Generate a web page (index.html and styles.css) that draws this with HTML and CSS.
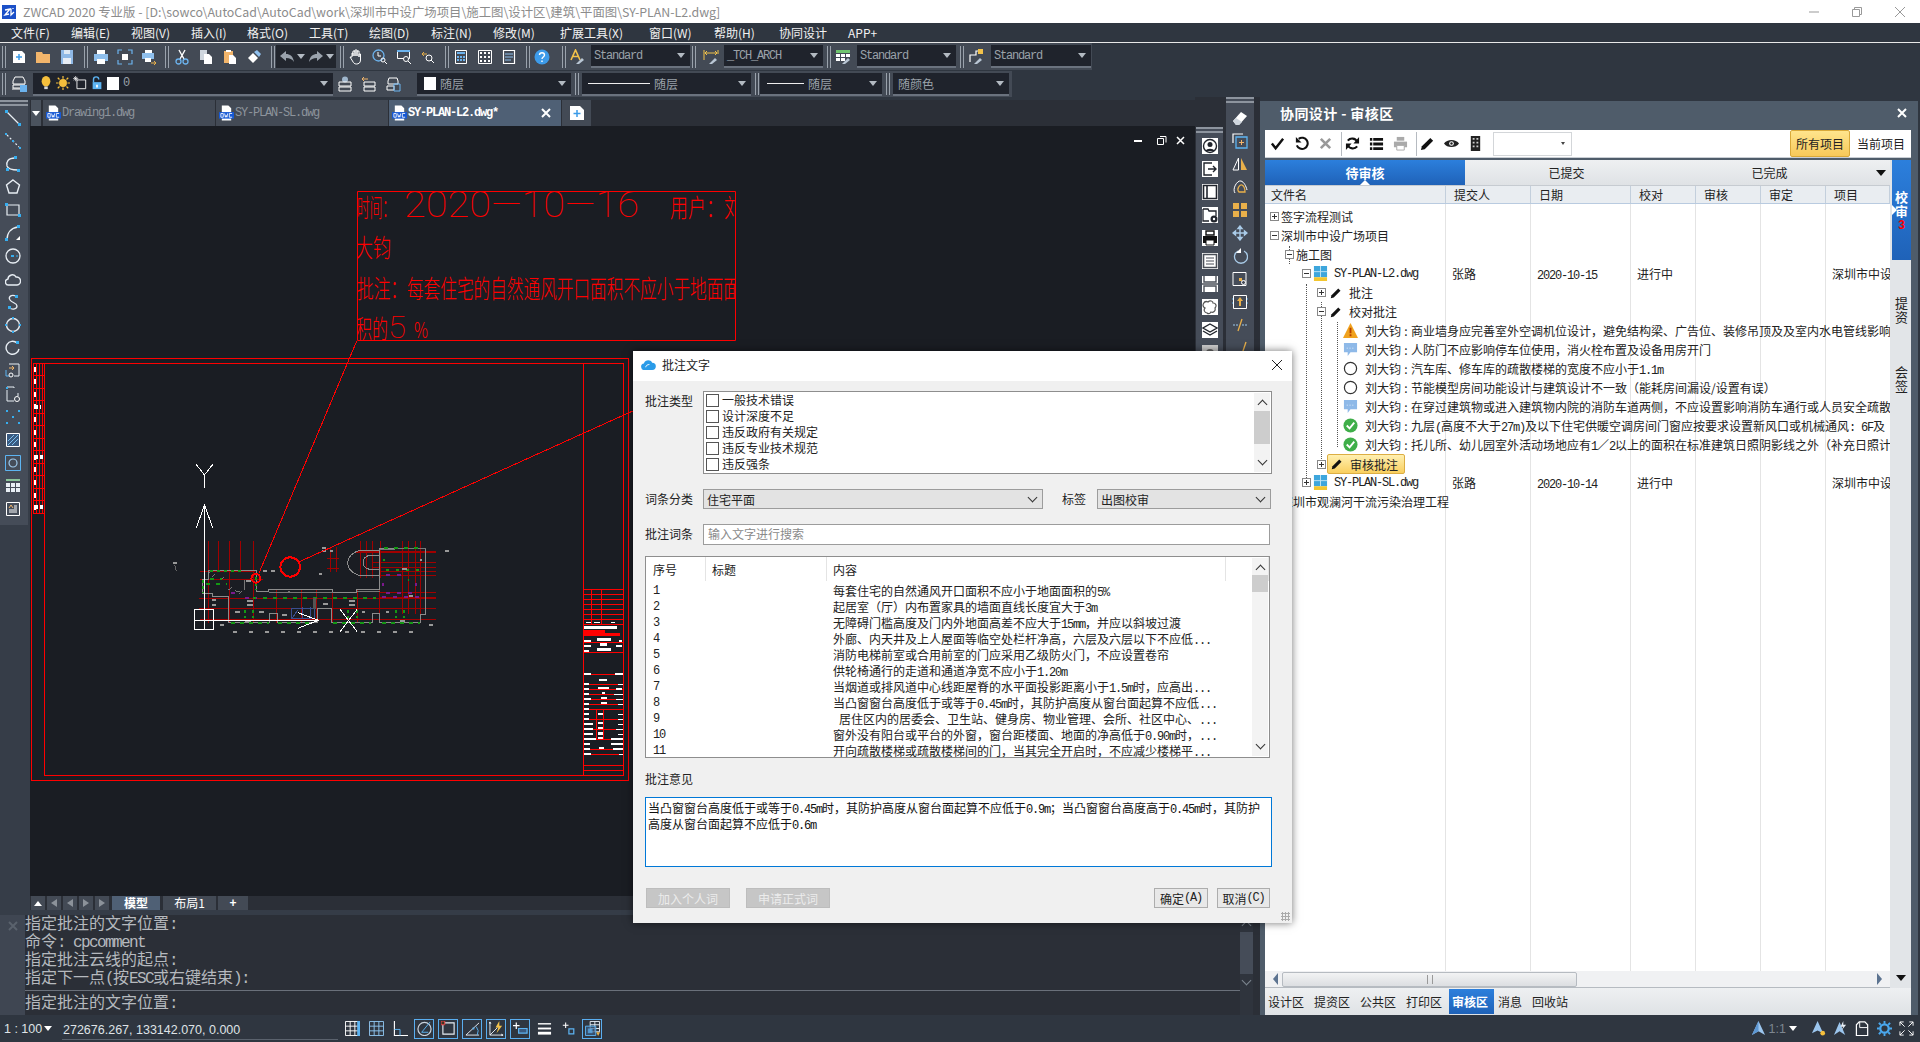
FILE: index.html
```html
<!DOCTYPE html>
<html lang="zh">
<head>
<meta charset="utf-8">
<title>ZWCAD 2020</title>
<link rel="stylesheet" href="styles.css">
</head>
<body>
<svg class="defs" xmlns="http://www.w3.org/2000/svg">
<symbol id="new" viewBox="0 0 16 16"><path d="M2 2h9l3 3v9H2z" fill="#fff"/><path d="M8 5v6M5 8h6" stroke="#3b9be8" stroke-width="1.5"/></symbol>
<symbol id="open" viewBox="0 0 16 16"><path d="M1 3h6l1 2h7v9H1z" fill="#f2b56b"/></symbol>
<symbol id="save" viewBox="0 0 16 16"><path d="M2 1h12v14H2z" fill="#8fb9e6"/><path d="M5 1h6v4H5z" fill="#dce8f4"/><path d="M4 9h8v6H4z" fill="#e8eef6"/></symbol>
<symbol id="print" viewBox="0 0 16 16"><path d="M4 1h8v4H4z" fill="#fff"/><path d="M1 5h14v7H1z" fill="#8fc0ee"/><path d="M4 10h8v5H4z" fill="#fff"/></symbol>
<symbol id="prev" viewBox="0 0 16 16"><path d="M1 5V1h4M11 1h4v4M15 11v4h-4M5 15H1v-4" fill="none" stroke="#6cb3ee" stroke-width="1.2"/><path d="M5 5h6v6H5z" fill="#fff"/></symbol>
<symbol id="plot" viewBox="0 0 16 16"><path d="M4 1h7v3H4z" fill="#fff"/><path d="M1 4h12v6H1z" fill="#8fc0ee"/><path d="M4 9h6v4H4z" fill="#fff"/><path d="M10 14h5m-2-2l2 2-2 2" fill="none" stroke="#e9b04a"/></symbol>
<symbol id="cut" viewBox="0 0 16 16"><path d="M5 1l5 9M11 1L6 10" stroke="#fff" stroke-width="1.4" fill="none"/><circle cx="4.500" cy="12.500" r="2.500" fill="none" stroke="#6cb3ee" stroke-width="1.300"/><circle cx="11.500" cy="12.500" r="2.500" fill="none" stroke="#6cb3ee" stroke-width="1.300"/></symbol>
<symbol id="copy" viewBox="0 0 16 16"><path d="M2 1h7v10H2z" fill="#cfd6de"/><path d="M6 5h5l3 3v7H6z" fill="#fff"/></symbol>
<symbol id="paste" viewBox="0 0 16 16"><path d="M2 2h9v12H2z" fill="#f2b56b"/><path d="M4 1h5v2H4z" fill="#fff"/><path d="M7 6h4l3 3v6H7z" fill="#fff"/></symbol>
<symbol id="brush" viewBox="0 0 16 16"><path d="M2 9l5-5 5 5-5 5z" fill="#fff"/><path d="M8 3l3-2 4 4-2 3z" fill="#8fc0ee"/></symbol>
<symbol id="undo" viewBox="0 0 16 16"><path d="M1 7l6-5v3c4 0 7 2 8 8-2-3-4-4-8-4v3z" fill="#9aa2ac"/></symbol>
<symbol id="redo" viewBox="0 0 16 16"><path d="M15 7L9 2v3C5 5 2 7 1 13c2-3 4-4 8-4v3z" fill="#9aa2ac"/></symbol>
<symbol id="hand" viewBox="0 0 16 16"><path d="M4 8V4h1v3V2h2v5V1h2v6V2h2v6V5h1.500v6c0 3-2 4-4 4s-3-1-4-3L2 8z" fill="none" stroke="#fff"/></symbol>
<symbol id="zoomr" viewBox="0 0 16 16"><circle cx="6.500" cy="6.500" r="5.500" fill="none" stroke="#6cb3ee" stroke-width="1.300"/><path d="M6 3v4h3" stroke="#fff" fill="none"/><circle cx="11" cy="11" r="2" fill="none" stroke="#fff"/><path d="M12.500 12.500L15 15" stroke="#fff"/></symbol>
<symbol id="zoomw" viewBox="0 0 16 16"><path d="M1.500 2.500h12v7h-12z" fill="none" stroke="#fff"/><path d="M1 1h13v2H1z" fill="#6cb3ee"/><circle cx="10" cy="10" r="2.500" fill="#434a55" stroke="#fff"/><path d="M12 12l3 3" stroke="#fff"/></symbol>
<symbol id="zoomp" viewBox="0 0 16 16"><path d="M2 5h5M4 3L2 5l2 2" fill="none" stroke="#e9b04a"/><circle cx="9" cy="9" r="3" fill="none" stroke="#fff"/><path d="M11 11l3 3" stroke="#fff"/></symbol>
<symbol id="calc" viewBox="0 0 16 16"><path d="M2.500 1.500h11v13h-11z" fill="none" stroke="#fff"/><path d="M4 3h8v2H4z" fill="#6cb3ee"/><path d="M4 7h2v2H4zM7 7h2v2H7zM10 7h2v2h-2zM4 10h2v2H4zM7 10h2v2H7zM10 10h2v2h-2z" fill="#6cb3ee"/></symbol>
<symbol id="sheet" viewBox="0 0 16 16"><path d="M1.500 1.500h13v13h-13z" fill="none" stroke="#fff"/><path d="M3 3h2v2H3zM7 3h2v2H7zM11 3h2v2h-2zM3 7h2v2H3zM7 7h2v2H7zM11 7h2v2h-2zM3 11h2v2H3zM7 11h2v2H7zM11 11h2v2h-2z" fill="#fff"/></symbol>
<symbol id="doc" viewBox="0 0 16 16"><path d="M2.500 1.500h11v13h-11z" fill="none" stroke="#fff" stroke-width="1.200"/><path d="M4 5h8M4 8h8M4 11h6" stroke="#8fc0ee"/></symbol>
<symbol id="help" viewBox="0 0 16 16"><circle cx="8" cy="8" r="7.500" fill="#3d9be9"/><path d="M5.500 6c0-3 5-3 5 0 0 2-2.500 2-2.500 4M8 11.500v1.500" fill="none" stroke="#fff" stroke-width="1.400"/></symbol>
<symbol id="stext" viewBox="0 0 16 16"><path d="M1 11L5.500 1 10 11M3 7.500h5" fill="none" stroke="#f2c24a" stroke-width="1.600"/><path d="M6 15l6-6 2 2-5 4z" fill="#b9c6d4"/></symbol>
<symbol id="sdim" viewBox="0 0 16 16"><path d="M1 1v10M15 1v4M2 4h12M4 2L2 4l2 2M12 2l2 2-2 2" fill="none" stroke="#f2c24a"/><path d="M6 15l6-6 2 2-5 4z" fill="#b9c6d4"/></symbol>
<symbol id="stab" viewBox="0 0 16 16"><path d="M1 1h14v3H1z" fill="#6fc46f"/><path d="M1 5h4v3H1zM6 5h4v3H6zM11 5h4v3h-4zM1 9h4v3H1zM6 9h4v3H6z" fill="#fff"/><path d="M7 15l6-6 2 2-5 4z" fill="#b9c6d4"/></symbol>
<symbol id="smul" viewBox="0 0 16 16"><path d="M2 13V6h6V2h4" fill="none" stroke="#fff" stroke-width="1.200"/><path d="M10 0h5v5h-5z" fill="#f2c24a"/><path d="M6 15l6-6 2 2-5 4z" fill="#b9c6d4"/></symbol>
<symbol id="layer" viewBox="0 0 16 16"><path d="M2 5l2-4h8l2 4v3H2zM2 9h12v3H2zM1 13h10" fill="none" stroke="#fff"/><path d="M9 9h7v7H9z" fill="#6cb3ee"/></symbol>
<symbol id="bulb" viewBox="0 0 16 16"><ellipse cx="8" cy="6" rx="5" ry="6" fill="#f5bf3c"/><path d="M6 12h4v3H6z" fill="#d9d9d9"/></symbol>
<symbol id="sun" viewBox="0 0 16 16"><circle cx="8" cy="8" r="4.500" fill="#f5bf3c"/><path d="M8 0v3M8 13v3M0 8h3M13 8h3M2 2l2 2M12 12l2 2M2 14l2-2M12 4l2-2" stroke="#f5bf3c" stroke-width="1.400"/></symbol>
<symbol id="frz" viewBox="0 0 16 16"><path d="M4.500 4.500h10v10h-10z" fill="#1f232c" stroke="#fff"/><path d="M3 0v6M0 3h6M1 1l4 4M5 1L1 5" stroke="#fff" stroke-width=".8"/></symbol>
<symbol id="lock" viewBox="0 0 16 16"><path d="M4 7V4a3 3 0 0 1 6 0" fill="none" stroke="#5db4f2" stroke-width="1.600"/><path d="M3 7h10v8H3z" fill="#5db4f2"/><path d="M7 10h2v3H7z" fill="#fff"/></symbol>
<symbol id="lay1" viewBox="0 0 16 16"><circle cx="8" cy="3.500" r="3" fill="#9fb6cc"/><path d="M2 6h12v4H2zM2 11h12v4H2z" fill="none" stroke="#fff"/></symbol>
<symbol id="lay2" viewBox="0 0 16 16"><path d="M3 6h11v4H3zM3 11h11v4H3z" fill="none" stroke="#fff"/><path d="M1 3h6M3 1L1 3l2 2" stroke="#f2b56b" fill="none"/></symbol>
<symbol id="lay3" viewBox="0 0 16 16"><path d="M3 5l1-3h8l1 3v3H3zM2 10h7v4H2z" fill="none" stroke="#fff"/><path d="M9 8h6v7H9z" fill="none" stroke="#6cb3ee"/></symbol>
<symbol id="l1" viewBox="0 0 16 16"><path d="M2 2l12 12" stroke="#e8eef4" stroke-width="1.200"/><path d="M0 0h3v3H0zM13 13h3v3h-3z" fill="#37aef0"/></symbol>
<symbol id="l2" viewBox="0 0 16 16"><path d="M2 2l12 12" stroke="#e8eef4" stroke-width="1.200" stroke-dasharray="2 2"/><path d="M0 0h2v2H0zM7 7h2v2H7zM14 14h2v2h-2z" fill="#37aef0"/></symbol>
<symbol id="l3" viewBox="0 0 16 16"><path d="M10 2C3 2 1 6 2 10c1 3 4 4 11 4" fill="none" stroke="#e8eef4" stroke-width="1.300"/><path d="M9 0h3v3H9zM1 12h3v3H1zM12 13h3v3h-3z" fill="#37aef0"/></symbol>
<symbol id="l4" viewBox="0 0 16 16"><path d="M8 1l6.500 5-2.500 8H4L1.500 6z" fill="none" stroke="#e8eef4" stroke-width="1.400"/></symbol>
<symbol id="l5" viewBox="0 0 16 16"><path d="M2 3h12v10H2z" fill="none" stroke="#e8eef4" stroke-width="1.200"/><path d="M0 1h3v3H0zM13 12h3v3h-3z" fill="#37aef0"/></symbol>
<symbol id="l6" viewBox="0 0 16 16"><path d="M2 15C2 8 6 3 13 2" fill="none" stroke="#e8eef4" stroke-width="1.400"/><path d="M0 13h3v3H0zM12 0h3v3h-3z" fill="#37aef0"/><path d="M11 15l4-4v4z" fill="#fff"/></symbol>
<symbol id="l7" viewBox="0 0 16 16"><circle cx="8" cy="8" r="7" fill="none" stroke="#e8eef4" stroke-width="1.300"/><path d="M6 7h3v2H6zM11 7.500h2v1h-2z" fill="#37aef0"/></symbol>
<symbol id="l8" viewBox="0 0 16 16"><path d="M4 14a3 3 0 0 1-1-6c0-4 6-6 8-2a4 4 0 0 1 1 8z" fill="none" stroke="#e8eef4" stroke-width="1.400"/></symbol>
<symbol id="l9" viewBox="0 0 16 16"><path d="M11 2C6 0 3 3 5 6s7 3 7 6-4 4-8 2" fill="none" stroke="#e8eef4" stroke-width="1.300"/><path d="M10 1h3v3h-3zM3 12h3v3H3z" fill="#37aef0"/></symbol>
<symbol id="l10" viewBox="0 0 16 16"><circle cx="8" cy="8" r="6.500" fill="none" stroke="#e8eef4" stroke-width="1.400"/><path d="M7 0h2v2H7zM0 7h2v2H0zM14 7h2v2h-2zM7 14h2v2H7z" fill="#37aef0"/></symbol>
<symbol id="l11" viewBox="0 0 16 16"><path d="M12 3a6.500 6.500 0 1 0 2 6" fill="none" stroke="#e8eef4" stroke-width="1.400"/><path d="M11 1h3v3h-3z" fill="#37aef0"/></symbol>
<symbol id="l12" viewBox="0 0 16 16"><path d="M4 1h10v12H9" fill="none" stroke="#e8eef4"/><path d="M1 5h4M6 5L4 3M6 5L4 7" stroke="#f2b56b" fill="none" transform="translate(3 0)"/><path d="M1 7v6h3" fill="none" stroke="#5db4f2"/><circle cx="6" cy="12" r="2" fill="none" stroke="#fff"/></symbol>
<symbol id="l13" viewBox="0 0 16 16"><path d="M2 1h7v1M2 4v11h7M13 7v3" fill="none" stroke="#e8eef4"/><circle cx="12" cy="13" r="2.500" fill="none" stroke="#fff"/><path d="M1 1h2v2H1z" fill="#37aef0"/></symbol>
<symbol id="l14" viewBox="0 0 16 16"><path d="M1 1h2v2H1zM13 1h2v2h-2zM7 7h2v2H7zM1 13h2v2H1zM13 13h2v2h-2z" fill="#37aef0"/></symbol>
<symbol id="l15" viewBox="0 0 16 16"><path d="M1.500 1.500h13v13h-13z" fill="#3a5a80" stroke="#fff"/><path d="M3 9l6-6M3 13l10-10M7 13l6-6" stroke="#7cc0f0"/></symbol>
<symbol id="l16" viewBox="0 0 16 16"><path d="M.5.500h15v15H.5z" fill="none" stroke="#5db4f2"/><circle cx="8" cy="8" r="4" fill="none" stroke="#9fc9ea" stroke-width="1.200"/></symbol>
<symbol id="l17" viewBox="0 0 16 16"><path d="M1 1h14v2H1z" fill="#8bc49a"/><path d="M1 5h4v4H1zM6 5h4v4H6zM11 5h4v4h-4zM1 10h4v4H1zM6 10h4v4H6zM11 10h4v4h-4z" fill="#e8eef4"/></symbol>
<symbol id="l18" viewBox="0 0 16 16"><path d="M1.500 1.500h13v13h-13z" fill="none" stroke="#fff"/><path d="M4 7l2-3 2 3" stroke="#f2b56b" fill="none"/><path d="M9 5h3M9 7h3M4 9h8M4 11h8" stroke="#fff"/></symbol>
<symbol id="a1" viewBox="0 0 16 16"><path d="M0 0h16v16H0z" fill="#fff"/><circle cx="8" cy="8" r="6.500" fill="none" stroke="#20242c" stroke-width="1.400"/><circle cx="8" cy="6.500" r="2.500" fill="#20242c"/><path d="M3.500 13c1-3 8-3 9 0z" fill="#20242c"/></symbol>
<symbol id="a2" viewBox="0 0 16 16"><path d="M0 0h16v16H0z" fill="#fff"/><path d="M10 2H2v12h8" fill="none" stroke="#20242c" stroke-width="1.400"/><path d="M6 8h8M11 5l3 3-3 3" fill="none" stroke="#20242c" stroke-width="1.400"/></symbol>
<symbol id="a3" viewBox="0 0 16 16"><path d="M0 0h16v16H0z" fill="#fff"/><path d="M1.500 1.500h13v13h-13z" fill="none" stroke="#20242c" stroke-width="1.600"/><path d="M5 2v12" stroke="#20242c" stroke-width="1.600"/></symbol>
<symbol id="a4" viewBox="0 0 16 16"><path d="M0 0h16v16H0z" fill="#fff"/><path d="M1 2h5l1 2h7v5M7 14H1V2" fill="none" stroke="#20242c" stroke-width="1.300"/><circle cx="12" cy="12" r="3.500" fill="#20242c"/><circle cx="12" cy="12" r="1.200" fill="#fff"/></symbol>
<symbol id="a5" viewBox="0 0 16 16"><path d="M0 0h16v16H0z" fill="#fff"/><path d="M4 1h8v4H4z" fill="none" stroke="#111" stroke-width="1.400"/><path d="M1 6h14v7H1z" fill="#111"/><path d="M4 10h8v5H4z" fill="#fff" stroke="#111"/></symbol>
<symbol id="a6" viewBox="0 0 16 16"><path d="M0 0h16v16H0z" fill="#fff"/><path d="M1.500 1.500h13v13h-13z" fill="none" stroke="#4a4f58" stroke-width="1.600"/><path d="M4 5h8M4 8h8M4 11h8" stroke="#4a4f58" stroke-width="1.200"/></symbol>
<symbol id="a7" viewBox="0 0 16 16"><path d="M0 0h16v16H0z" fill="#fff"/><path d="M2 0v6h12V0M2 16v-6h12v6M0 8h16" fill="none" stroke="#4a4f58" stroke-width="1.400"/></symbol>
<symbol id="a8" viewBox="0 0 16 16"><path d="M0 0h16v16H0z" fill="#fff"/><path d="M5 14a3 3 0 0 1-2-5 3 3 0 0 1 3-6c2-2 5-1 5 1 3 0 4 3 2 5 1 3-2 5-4 4-1 2-3 2-4 1z" fill="none" stroke="#555" stroke-width="1.200"/></symbol>
<symbol id="a9" viewBox="0 0 16 16"><path d="M0 0h16v16H0z" fill="#fff"/><path d="M8 2l7 4-7 4-7-4z" fill="none" stroke="#20242c" stroke-width="1.400"/><path d="M1 9l7 4 7-4" fill="none" stroke="#20242c" stroke-width="1.400"/></symbol>
<symbol id="a10" viewBox="0 0 16 16"><path d="M0 0h16v16H0z" fill="#ccc"/><circle cx="8" cy="8" r="4" fill="#666"/></symbol>
<symbol id="b1" viewBox="0 0 16 16"><path d="M1 11l8-9 6 4-8 9H4z" fill="#fff"/><path d="M1 11l3-3 6 4-3 3H4z" fill="#cfd6de"/></symbol>
<symbol id="b2" viewBox="0 0 16 16"><path d="M1 10V1h10" fill="none" stroke="#fff" stroke-width="1.200"/><path d="M4 4h11v11H4z" fill="none" stroke="#5db4f2" stroke-width="1.300"/><path d="M9.500 7v5M7 9.500h5" stroke="#f2b56b"/></symbol>
<symbol id="b3" viewBox="0 0 16 16"><path d="M6.500 2v12H1z" fill="none" stroke="#fff"/><path d="M9 2v12h6z" fill="#e9b04a"/></symbol>
<symbol id="b4" viewBox="0 0 16 16"><path d="M3 14C0 10 5 1 9 2c3 1 5 5 6 9" fill="none" stroke="#fff"/><path d="M7 13C4 10 8 5 10 6c2 1 3 4 3 7z" fill="none" stroke="#e9b04a" stroke-width="1.300"/></symbol>
<symbol id="b5" viewBox="0 0 16 16"><path d="M1 1h6v6H1zM9 1h6v6H9zM1 9h6v6H1zM9 9h6v6H9z" fill="#e9b04a"/></symbol>
<symbol id="b6" viewBox="0 0 16 16"><path d="M8 1v14M1 8h14M8 1L6 3.500h4zM8 15l-2-2.500h4zM1 8l2.500-2v4zM15 8l-2.500-2v4z" stroke="#a9cbe8" stroke-width="1.400" fill="#a9cbe8"/></symbol>
<symbol id="b7" viewBox="0 0 16 16"><path d="M6 3a6.500 6.500 0 1 0 6 0" fill="none" stroke="#a9cbe8" stroke-width="1.300"/><path d="M8 0v5H3z" fill="#fff" transform="translate(1 0)"/></symbol>
<symbol id="b8" viewBox="0 0 16 16"><path d="M1 1.500h13v13H1z" fill="none" stroke="#fff"/><path d="M7 7h3v3H7z" fill="#e9b04a"/><circle cx="11.500" cy="11.500" r="2" fill="none" stroke="#fff"/></symbol>
<symbol id="b9" viewBox="0 0 16 16"><path d="M1.500 1.500h13v13h-13z" fill="none" stroke="#fff"/><path d="M8 3l3 4H9v5H7V7H5z" fill="#e9b04a"/><path d="M0 5h1M15 5h1M0 9h1M15 9h1" stroke="#5db4f2"/></symbol>
<symbol id="b10" viewBox="0 0 16 16"><path d="M1 8h5M10 8h5" stroke="#9fc9ea" stroke-dasharray="2 1"/><path d="M10 2L6 14" stroke="#e9b04a" stroke-width="1.300"/></symbol>
<symbol id="b11" viewBox="0 0 16 16"><path d="M1 12h9" stroke="#9fc9ea" stroke-dasharray="2 1"/><path d="M14 2l-4 12" stroke="#e9b04a" stroke-width="1.300"/></symbol>
<symbol id="s1" viewBox="0 0 16 16"><path d="M.5.500h15v15H.5zM5.500.5v15M10.500.5v15M.5 5.500h15M.5 10.500h15" fill="none" stroke="#fff"/><path d="M13 0h3v16h-3z" fill="#5db4f2"/></symbol>
<symbol id="s2" viewBox="0 0 16 16"><path d="M.5.500h15v15H.5zM5.500.5v15M10.500.5v15M.5 5.500h15M.5 10.500h15" fill="none" stroke="#8fc5f0"/></symbol>
<symbol id="s3" viewBox="0 0 16 16"><path d="M1.500 0v15.500H16" fill="none" stroke="#fff" stroke-width="1.200"/><path d="M1.500 9h6v6.500" fill="none" stroke="#5db4f2"/></symbol>
<symbol id="s4" viewBox="0 0 16 16"><circle cx="8" cy="8.500" r="7" fill="none" stroke="#c9d2db" stroke-width="1.300"/><path d="M14 1L5 12h7" fill="none" stroke="#5db4f2"/></symbol>
<symbol id="s5" viewBox="0 0 16 16"><path d="M2 2h12v12H2z" fill="none" stroke="#e8eef4" stroke-width="1.200"/><path d="M0 0h4v4H0z" fill="#432" stroke="#e44"/></symbol>
<symbol id="s6" viewBox="0 0 16 16"><path d="M1 15L15 2M1 15h14" fill="none" stroke="#e8eef4"/><path d="M8 7h2v2H8z" fill="#5db4f2"/><path d="M12 6a8 8 0 0 1 1 9" fill="none" stroke="#5db4f2"/></symbol>
<symbol id="s7" viewBox="0 0 16 16"><path d="M1 1v14h14M1 15L9 7M1 1L0 3M1 1l1 2M15 15l-2-1M15 15l-2 1" fill="none" stroke="#e8eef4"/><path d="M11 0L7 7h3L8 13l6-8h-3z" fill="#f2c24a"/></symbol>
<symbol id="s8" viewBox="0 0 16 16"><path d="M0 5h7M3.500 1.500v7" stroke="#fff" stroke-width="1.300"/><path d="M6 8h9v5H6z" fill="#3a5a80" stroke="#5db4f2" stroke-width="1.300"/></symbol>
<symbol id="s9" viewBox="0 0 16 16"><path d="M1 3h14" stroke="#fff" stroke-width="1.500"/><path d="M1 8h14" stroke="#fff" stroke-width="2"/><path d="M1 13h14" stroke="#fff" stroke-width="3"/></symbol>
<symbol id="s10" viewBox="0 0 16 16"><path d="M1 4h7M4.500.5v7" stroke="#fff" stroke-width="1.300"/><path d="M8.500 8.500h6v6h-6z" fill="none" stroke="#5db4f2" stroke-width="1.500"/></symbol>
<symbol id="s11" viewBox="0 0 16 16"><path d="M5.500.5h10v11h-10zM10.500.5v11M5.500 4h10M5.500 8h10" fill="none" stroke="#e8eef4"/><path d="M.5 5.500h11v10H.5z" fill="#3a5a80" fill-opacity=".7" stroke="#5db4f2"/><path d="M3 8h5v5H3z" fill="#5db4f2" opacity=".7"/><path d="M12 12h4l-2 4z" fill="#e9b04a"/></symbol>
<symbol id="r1" viewBox="0 0 16 16"><path d="M2 8l4 5 8-10" fill="none" stroke="#111" stroke-width="2.600"/></symbol>
<symbol id="r2" viewBox="0 0 16 16"><path d="M5 3a6 6 0 1 1-2 7" fill="none" stroke="#111" stroke-width="2.200"/><path d="M2 1v6h6z" fill="#111"/></symbol>
<symbol id="r3" viewBox="0 0 16 16"><path d="M3 3l10 10M13 3L3 13" stroke="#999" stroke-width="2.800"/></symbol>
<symbol id="r4" viewBox="0 0 16 16"><path d="M13 6A6 6 0 0 0 3 5M3 10a6 6 0 0 0 10 1" fill="none" stroke="#111" stroke-width="2.200"/><path d="M15 1v7H9zM1 15V8h6z" fill="#111"/></symbol>
<symbol id="r5" viewBox="0 0 16 16"><path d="M1 2h14v3H1zM1 7h14v3H1zM1 12h14v3H1z" fill="#111"/><path d="M4 2v13" stroke="#fff"/></symbol>
<symbol id="r6" viewBox="0 0 16 16"><path d="M4 1h8v4H4z" fill="#aaa"/><path d="M1 6h14v6H1z" fill="#aaa"/><path d="M4 10h8v5H4z" fill="#fff" stroke="#aaa"/></symbol>
<symbol id="r7" viewBox="0 0 16 16"><path d="M1 15l1-4L11 2l3 3-9 9z" fill="#111"/></symbol>
<symbol id="r8" viewBox="0 0 16 16"><path d="M0 8c3-5 13-5 16 0-3 5-13 5-16 0z" fill="#222"/><circle cx="8" cy="8" r="2.500" fill="#fff"/><circle cx="8" cy="8" r="1.300" fill="#222"/></symbol>
<symbol id="r9" viewBox="0 0 16 16"><path d="M3 0h10v16H3z" fill="#222"/><path d="M5 2h2v2H5zM9 2h2v2H9zM5 6h2v2H5zM9 6h2v2H9zM5 10h2v2H5zM9 10h2v2H9z" fill="#ccc"/></symbol>
<symbol id="dwgfile" viewBox="0 0 16 16"><path d="M1 0h14v12H1z" fill="#3ea6dc"/><path d="M8 0v12M1 6h14" stroke="#bfe4f5"/><path d="M1 12h14v4H1z" fill="#f3c62f"/></symbol>
<symbol id="warn" viewBox="0 0 16 16"><path d="M8 0l8 16H0z" fill="#f0a21e"/><path d="M7 5h2v6H7zM7 12h2v2H7z" fill="#b84000"/></symbol>
<symbol id="cmt" viewBox="0 0 16 16"><path d="M1 1h14v10H8l-3 4v-4H1z" fill="#8eb9e8"/><path d="M4 6h1v1H4zM7 6h1v1H7zM10 6h1v1h-1z" fill="#fff"/></symbol>
<symbol id="ring" viewBox="0 0 16 16"><circle cx="8" cy="8" r="6.500" fill="#fff" stroke="#333" stroke-width="1.300"/></symbol>
<symbol id="ok" viewBox="0 0 16 16"><circle cx="8" cy="8" r="7.500" fill="#3fae49"/><path d="M4 8l3 3 5-6" fill="none" stroke="#fff" stroke-width="2"/></symbol>
<symbol id="cloud" viewBox="0 0 16 12"><path d="M4 12a3.500 3.500 0 0 1-1-7C4 1 10 0 12 4a4 4 0 0 1 0 8z" fill="#2a9be8"/><path d="M5 9c0-2 2-3 4-3" stroke="#fff" fill="none"/></symbol>
<symbol id="dwc" viewBox="0 0 16 16"><path d="M3 0h7l3 3v13H3z" fill="#fff"/><path d="M0 7h16v7H0z" fill="#1659d6"/><path d="M2 8.500h2.500v4H2zM6 8.500l.8 4 .8-2 .8 2 .8-4M11 8.500h3M11 8.500v4h3" fill="none" stroke="#fff" stroke-width=".9"/></symbol>
<symbol id="tabnew" viewBox="0 0 16 16"><path d="M1 1h10l4 4v10H1z" fill="#fff"/><path d="M8 5v7M4.500 8.500h7" stroke="#3b9be8" stroke-width="1.500"/></symbol>
<symbol id="ann" viewBox="0 0 16 16"><path d="M8 0L15 15 8 11 1 15z" fill="#9cc6ee"/><path d="M8 0v11L1 15z" fill="#5d97d3"/></symbol>
<symbol id="annb" viewBox="0 0 16 16"><path d="M7 0L13 13 7 10 1 13z" fill="#9cc6ee"/><circle cx="12.500" cy="13" r="2.500" fill="#f5bf3c"/></symbol>
<symbol id="annc" viewBox="0 0 16 16"><path d="M7 1L13 15 7 11 1 15z" fill="#9cc6ee"/><path d="M11 0L8 6h3L9 10l5-6h-3z" fill="#e8eef4"/></symbol>
<symbol id="wksp" viewBox="0 0 16 16"><path d="M1.500 15.500V4l3-3h6l3 3v11.500z" fill="none" stroke="#fff" stroke-width="1.300"/><path d="M5 1v6h8" stroke="#fff" fill="none"/></symbol>
<symbol id="gear" viewBox="0 0 16 16"><circle cx="8" cy="8" r="4.500" fill="none" stroke="#4aa8ee" stroke-width="2.400"/><path d="M8 0v3M8 13v3M0 8h3M13 8h3M2 2l2 2M12 12l2 2M2 14l2-2M12 4l2-2" stroke="#4aa8ee" stroke-width="2"/></symbol>
<symbol id="full" viewBox="0 0 16 16"><path d="M1 5V1h4M1 1l5 5M11 1h4v4M15 1l-5 5M1 11v4h4M1 15l5-5M15 11v4h-4M15 15l-5-5" fill="none" stroke="#fff"/></symbol>
</svg>

<div class="app">
  <header class="titlebar">
    <svg class="logo" viewBox="0 0 14 14"><path d="M0 0h14v14H0z" fill="#1b50c8"/><path d="M3 5l5-1-5 6 4-1M9 4v6l3-3M11 3v1" fill="none" stroke="#fff" stroke-width="1.300"/></svg>
    <span class="ttl">ZWCAD 2020 专业版 - [D:\sowco\AutoCad\AutoCad\work\深圳市中设广场项目\施工图\设计区\建筑\平面图\SY-PLAN-L2.dwg]</span>
    <div class="winbtns">
      <svg class="wb" viewBox="0 0 10 10"><path d="M0 5h10" stroke="#999"/></svg>
      <svg class="wb" viewBox="0 0 10 10"><path d="M2.500 2.500V.5h7v7h-2M.5 2.500h7v7h-7z" fill="none" stroke="#999"/></svg>
      <svg class="wb" viewBox="0 0 10 10"><path d="M0 0l10 10M10 0L0 10" stroke="#999"/></svg>
    </div>
  </header>
  <nav class="menubar">
    <span>文件(F)</span><span>编辑(E)</span><span>视图(V)</span><span>插入(I)</span><span>格式(O)</span><span>工具(T)</span><span>绘图(D)</span><span>标注(N)</span><span>修改(M)</span><span>扩展工具(X)</span><span>窗口(W)</span><span>帮助(H)</span><span>协同设计</span><span>APP+</span>
  </nav>
  <div class="tb tb1">
    <i class="grip g2"></i>
    <span class="ti"><svg class="ic"><use href="#new"/></svg></span><span class="ti"><svg class="ic"><use href="#open"/></svg></span><span class="ti"><svg class="ic"><use href="#save"/></svg></span>
    <i class="grip g5"></i>
    <span class="ti"><svg class="ic"><use href="#print"/></svg></span><span class="ti"><svg class="ic"><use href="#prev"/></svg></span><span class="ti"><svg class="ic"><use href="#plot"/></svg></span>
    <i class="grip g41"></i>
    <span class="ti"><svg class="ic"><use href="#cut"/></svg></span><span class="ti"><svg class="ic"><use href="#copy"/></svg></span><span class="ti"><svg class="ic"><use href="#paste"/></svg></span><span class="ti"><svg class="ic"><use href="#brush"/></svg></span>
    <i class="grip g5"></i>
    <span class="udgroup"><svg class="ic"><use href="#undo"/></svg><i class="arr"></i><svg class="ic"><use href="#redo"/></svg><i class="arr"></i></span>
    <i class="grip g4"></i>
    <span class="ti"><svg class="ic"><use href="#hand"/></svg></span><span class="ti"><svg class="ic"><use href="#zoomr"/></svg></span><span class="ti"><svg class="ic"><use href="#zoomw"/></svg></span><span class="ti"><svg class="ic"><use href="#zoomp"/></svg></span>
    <i class="grip g50"></i>
    <span class="ti"><svg class="ic"><use href="#calc"/></svg></span><span class="ti"><svg class="ic"><use href="#sheet"/></svg></span><span class="ti"><svg class="ic"><use href="#doc"/></svg></span>
    <i class="grip g50"></i>
    <span class="ti"><svg class="ic"><use href="#help"/></svg></span>
    <i class="grip g8"></i>
    <span class="ti"><svg class="ic"><use href="#stext"/></svg></span>
    <span class="combo w99 lat">Standard<i class="arr"></i></span>
    <i class="grip g2"></i>
    <span class="ti t3"><svg class="ic"><use href="#sdim"/></svg></span>
    <span class="combo w99 lat">_TCH_ARCH<i class="arr"></i></span>
    <i class="grip g4"></i>
    <span class="ti"><svg class="ic"><use href="#stab"/></svg></span>
    <span class="combo w99 c2 lat">Standard<i class="arr"></i></span>
    <i class="grip g4"></i>
    <span class="ti"><svg class="ic"><use href="#smul"/></svg></span>
    <span class="combo w100 c1 lat">Standard<i class="arr"></i></span>
  </div>
  <div class="tb tb2">
    <i class="grip g2"></i>
    <span class="ti"><svg class="ic"><use href="#layer"/></svg></span>
    <span class="combo w300">
      <svg class="ic14"><use href="#bulb"/></svg><svg class="ic14"><use href="#sun"/></svg><svg class="ic14"><use href="#frz"/></svg><svg class="ic14"><use href="#lock"/></svg><i class="sw"></i><span class="lat">0</span><i class="arr"></i>
    </span>
    <span class="ti"><svg class="ic"><use href="#lay1"/></svg></span><span class="ti"><svg class="ic"><use href="#lay2"/></svg></span><span class="ti"><svg class="ic"><use href="#lay3"/></svg></span>
    <span class="combo w154"><i class="sw"></i>随层<i class="arr"></i></span>
    <i class="grip g4"></i>
    <span class="combo w169"><i class="ln l62"></i>随层<i class="arr"></i></span>
    <i class="grip g4"></i>
    <span class="combo w122"><i class="ln l37"></i>随层<i class="arr"></i></span>
    <i class="grip g4"></i>
    <span class="combo w116">随颜色<i class="arr"></i></span>
  </div>

  <main class="body">
    <div class="workspace">
      <div class="workarea">
        <aside class="leftbar">
          <div class="leftstrip">
            <i class="bars"></i>
            <svg class="lic"><use href="#l1"/></svg><svg class="lic"><use href="#l2"/></svg><svg class="lic"><use href="#l3"/></svg><svg class="lic"><use href="#l4"/></svg><svg class="lic"><use href="#l5"/></svg><svg class="lic"><use href="#l6"/></svg><svg class="lic"><use href="#l7"/></svg><svg class="lic"><use href="#l8"/></svg><svg class="lic"><use href="#l9"/></svg><svg class="lic"><use href="#l10"/></svg><svg class="lic"><use href="#l11"/></svg><svg class="lic"><use href="#l12"/></svg><svg class="lic"><use href="#l13"/></svg><svg class="lic"><use href="#l14"/></svg><svg class="lic"><use href="#l15"/></svg><svg class="lic"><use href="#l16"/></svg><svg class="lic"><use href="#l17"/></svg><svg class="lic"><use href="#l18"/></svg>
          </div>
        </aside>
        <div class="center">
          <div class="tabs">
            <span class="tabarrow"><i class="arr white"></i></span>
            <span class="tab"><svg class="dw"><use href="#dwc"/></svg>Drawing1.dwg</span>
            <span class="tab"><svg class="dw"><use href="#dwc"/></svg>SY-PLAN-SL.dwg</span>
            <span class="tab on"><svg class="dw"><use href="#dwc"/></svg>SY-PLAN-L2.dwg*<svg class="tabx" viewBox="0 0 10 10"><path d="M1 1l8 8M9 1L1 9" stroke="#fff" stroke-width="2"/></svg></span>
            <span class="tabadd"><svg class="ic"><use href="#tabnew"/></svg></span>
          </div>
          <div class="drawing">
            <svg class="cad" viewBox="30 126 1165 770" xmlns="http://www.w3.org/2000/svg">
              <g fill="none" stroke="#f00">
                <path d="M1134 141h8" stroke="#fff" stroke-width="2"/>
                <path d="M1157.500 138.500h6v6h-6zM1160 136.500h6v6" stroke="#fff"/>
                <path d="M1177 137l7 7M1184 137l-7 7" stroke="#fff" stroke-width="1.500"/>
                <rect x="357.500" y="191.500" width="378" height="149"/>
              </g>
              <svg x="357" y="191" width="379" height="150" viewBox="357 191 379 150">
                <g class="redtxt">
                  <text x="357" y="217" font-size="25" textLength="38" lengthAdjust="spacingAndGlyphs">时间&#xFF1A;</text>
                  <text class="thin" x="404" y="217" font-size="36" textLength="235" lengthAdjust="spacingAndGlyphs">2020—10—16</text>
                  <text x="670" y="217" font-size="25" textLength="72" lengthAdjust="spacingAndGlyphs">用户&#xFF1A;刘</text>
                  <text x="355" y="257" font-size="25" textLength="36" lengthAdjust="spacingAndGlyphs">大钧</text>
                  <text x="357" y="298" font-size="25" textLength="383" lengthAdjust="spacingAndGlyphs">批注&#xFF1A;每套住宅的自然通风开口面积不应小于地面面</text>
                  <text x="356" y="338" font-size="25" textLength="32" lengthAdjust="spacingAndGlyphs">积的</text>
                  <text class="thin" x="388" y="338" font-size="32" textLength="18" lengthAdjust="spacingAndGlyphs">5</text>
                  <text x="414" y="338" font-size="22" textLength="14" lengthAdjust="spacingAndGlyphs">%</text>
                </g>
              </svg>
              <g class="crisp" transform="translate(0 350) scale(.40816 .33333)" fill="none" stroke-width="1">
                <g stroke="#f00">
                  <rect x="77" y="25" width="1463" height="1267"/>
                  <rect x="108" y="40" width="1419" height="1236"/>
                  <path d="M83 40v450h25M83 40h25M90 40v450M97 40v450M103 40v450M1430 40v1236"/>
                  <path d="M83 78h25M83 115h25M83 152h25M83 190h25M83 228h25M83 265h25M83 303h25M83 340h25M83 378h25M83 415h25M83 452h25"/>
                  <path d="M1430 720h97M1430 735h97M1430 750h97M1430 765h97M1430 780h97M1430 795h97M1430 810h97M1430 825h97M1430 877h97M1430 907h97M1430 975h97M1430 1005h97M1430 1020h97M1430 1035h97M1430 1050h97M1430 1065h97M1430 1080h97M1430 1110h97M1430 1140h97M1430 1170h97M1430 1200h97M1430 1215h97M1430 1248h97M1430 1262h97M1450 720v105M1473 720v105M1462 1080v90M1478 1080v90"/>
                </g>
                <path d="M1430 840h52v8h38v10h-90z" fill="#f00"/>
                <path d="M85.500 50V490" stroke="#fff" stroke-width="2" stroke-dasharray="5 7.600"/>
                <path d="M85 171h16M85 322h24M85 472h24" stroke="#fff" stroke-width="4" stroke-dasharray="3 2"/>
                <g fill="#fff">
                  <path d="M1436 815h11v4h-11zM1455 815h14v4h-14zM1497 815h10v4h-10zM1430 828h82v8h-82zM1463 864h34v8h-34zM1432 870h16v6h-16zM1517 870h8v6h-8zM1470 880h18v8h-18zM1430 885h18v6h-18zM1510 885h15v6h-15zM1462 894h36v9h-36zM1430 900h12v6h-12zM1430 969h18v6h-18zM1507 969h19v6h-19zM1467 987h20v6h-20zM1430 999h12v6h-12zM1515 1002h11v3h-11zM1465 1011h27v5h-27zM1430 1014h12v6h-12zM1510 1015h15v4h-15zM1432 1029h10v6h-10zM1474 1026h8v6h-8zM1504 1032h22v3h-22zM1430 1044h18v6h-18zM1472 1040h14v6h-14zM1510 1046h16v3h-16zM1430 1059h12v6h-12zM1472 1056h14v6h-14zM1515 1061h11v3h-11zM1430 1074h12v6h-12zM1430 1090h12v6h-12zM1515 1092h11v3h-11zM1464 1088h13v6h-13zM1430 1105h12v6h-12zM1515 1107h11v3h-11zM1430 1119h24v7h-24zM1464 1116h14v6h-14zM1515 1122h11v3h-11zM1430 1134h24v7h-24zM1464 1130h14v8h-14zM1510 1137h16v3h-16zM1430 1149h24v7h-24zM1464 1146h14v8h-14zM1515 1152h11v3h-11zM1430 1164h30v7h-30zM1464 1160h14v8h-14zM1498 1164h28v7h-28zM1430 1179h15v6h-15zM1498 1179h28v6h-28zM1430 1194h15v6h-15zM1468 1191h12v6h-12zM1503 1194h23v6h-23zM1430 1209h18v6h-18zM1516 1212h10v3h-10z"/>
                </g>
                <g stroke="#a00000">
                  <path d="M511 573v247M536 573v90M562 573v247M590 573v90M620 573v247M678 720v100M738 720v100M776 720v100M815 720v100M875 720v100M930 720v100M883 573v110M897 573v110M912 573v110M932 573v110M985 573v220M1000 573v220M1018 573v220M1030 573v220M810 590v75M825 590v75M800 625h30M800 655h30"/>
                  <path d="M490 665h135M490 690h155M488 745h580M488 775h580M490 810h578M930 727h138M915 637h153M915 653h153M930 665h138M930 677h138M930 743h138"/>
                  <path d="M870 607h198" stroke-width="2"/>
                </g>
                <path d="M510 662H628V725H658V720H815V727H873V720H930V595H1043V793H1030V818H930V790H912V818H812V775H778V818H680V790H660V818H560V740H520V730H497V690H510Z" stroke="#8c8c8c"/>
                <path d="M930 601H890A38 38 0 0 0 890 677H930M930 616H905A22 22 0 0 0 905 658H930" stroke="#8c8c8c"/>
                <path d="M512 668l8-8M520 680l6-6M540 690l8-8M560 720l8-8M585 732l8-8M600 690v30M575 722l12 4M660 728H815M875 726h55M1043 595l-113 3M705 728l4-4M795 730l4-3" stroke="#777"/>
                <g stroke="#149814" stroke-width="2">
                  <path d="M515 662h85" stroke-dasharray="3 4"/>
                  <path d="M505 703h50M515 688h30M620 745h300" stroke-dasharray="4 6"/>
                  <path d="M940 595h90" stroke-dasharray="4 6"/>
                  <path d="M945 660h85" stroke-dasharray="3 7"/>
                  <path d="M565 818h95M680 818h90M815 818h95M935 818h95" stroke-dasharray="4 5"/>
                  <path d="M600 780v25M620 780v25M852 780v25M875 780v25M970 780v25M990 780v25" stroke-dasharray="3 3"/>
                  <path d="M498 690v40M628 680v40" stroke-dasharray="3 3"/>
                  <path d="M940 628v5M1000 690h3"/>
                </g>
                <g stroke="#7a1a8c" stroke-width="2">
                  <path d="M565 728h20M600 745h30M935 742h100M945 730h80M945 675h50" stroke-dasharray="4 7"/>
                  <path d="M938 700v8M1020 700v8"/>
                </g>
                <path d="M715 775h55v30h-55zM740 770v35M760 770v35M715 805l15-25" stroke="#3a4f90"/>
                <path d="M770 745v32" stroke="#555" stroke-width="3"/>
                <g stroke="#999" stroke-width="2">
                  <path d="M570 846H1032" stroke-dasharray="4 12"/>
                  <path d="M645 662h30M790 602h25M1090 603h12M425 638h10M790 595h14" stroke-dasharray="4 4"/>
                  <path d="M520 750h8M520 765h8M575 785h12M635 785h12M692 795h12M792 763h12M886 785h8M945 785h8M1003 738h8M1052 826h8M538 825h10M600 812h15M980 812h12"/>
                  <path d="M985 658h12M1030 630h5M782 673h8M603 693h12M605 752h15M605 764h15M855 752h15M855 764h15"/>
                </g>
                <path d="M428 645l4 18" stroke="#666"/>
                <g stroke="#fff">
                  <path d="M480 342l21 33 21-33M501 375v38"/>
                  <path d="M501 465V780M481 533l20-68 20 68"/>
                  <path d="M476 780h47v58h-47zM501 780v58M476 811h47"/>
                  <path d="M523 811h257M730 788l50 23-50 24"/>
                  <path d="M833 778l42 67M875 778l-42 67"/>
                </g>
                <g stroke="#f00">
                  <ellipse cx="627" cy="685" rx="11" ry="13" stroke-width="2"/>
                  <ellipse cx="711" cy="651" rx="24" ry="29" stroke-width="2"/>
                  <path d="M635 668L874 -27M730 637L1552 182"/>
                </g>
              </g>
            </svg>
          </div>
          <div class="layouttabs">
            <span class="lb"><i class="up"></i></span><span class="lb dim"><i class="first"></i></span><span class="lb dim"><i class="prev"></i></span><span class="lb dim"><i class="next"></i></span><span class="lb dim"><i class="last"></i></span>
            <span class="ltab on">模型</span><span class="ltab lay">布局1</span><span class="ltab plus">+</span>
          </div>
          <div class="under"></div>
        </div>
        <div class="tools-right">
          <div class="col cola">
            <i class="bars"></i>
            <svg class="cic"><use href="#a1"/></svg><svg class="cic"><use href="#a2"/></svg><svg class="cic"><use href="#a3"/></svg><svg class="cic"><use href="#a4"/></svg><svg class="cic"><use href="#a5"/></svg><svg class="cic"><use href="#a6"/></svg><svg class="cic"><use href="#a7"/></svg><svg class="cic"><use href="#a8"/></svg><svg class="cic"><use href="#a9"/></svg><svg class="cic"><use href="#a10"/></svg>
          </div>
          <div class="col colb">
            <i class="bars"></i>
            <svg class="cic"><use href="#b1"/></svg><svg class="cic"><use href="#b2"/></svg><svg class="cic"><use href="#b3"/></svg><svg class="cic"><use href="#b4"/></svg><svg class="cic"><use href="#b5"/></svg><svg class="cic"><use href="#b6"/></svg><svg class="cic"><use href="#b7"/></svg><svg class="cic"><use href="#b8"/></svg><svg class="cic"><use href="#b9"/></svg><svg class="cic"><use href="#b10"/></svg><svg class="cic"><use href="#b11"/></svg>
          </div>
        </div>
      </div>
      <section class="command">
        <div class="cmdside"><svg class="cmdx" viewBox="0 0 10 10"><path d="M1 1l8 8M9 1L1 9" stroke="#5a626d" stroke-width="2"/></svg></div>
        <div class="cmdmain">
          <div class="cmdlog">
            <div>指定批注的文字位置<i class="m">:</i></div>
            <div>命令<i class="m">: cpcomment</i></div>
            <div>指定批注云线的起点<i class="m">:</i></div>
            <div>指定下一点<i class="m">(</i>按<i class="m">ESC</i>或右键结束<i class="m">):</i></div>
          </div>
          <div class="cmdinput">指定批注的文字位置<i class="m">:</i></div>
        </div>
        <div class="cmdscroll"><i class="chev up"></i><i class="sthumb"></i><i class="chev dn"></i></div>
      </section>
    </div>

    <section class="panel">
      <div class="ptitle"><span>协同设计 - 审核区</span><svg class="pclose" viewBox="0 0 10 10"><path d="M1 1l8 8M9 1L1 9" stroke="#fff" stroke-width="2"/></svg></div>
      <div class="ptool">
        <svg class="pi"><use href="#r1"/></svg><svg class="pi"><use href="#r2"/></svg><svg class="pi"><use href="#r3"/></svg><i class="psep"></i><svg class="pi"><use href="#r4"/></svg><svg class="pi"><use href="#r5"/></svg><svg class="pi"><use href="#r6"/></svg><i class="psep"></i><svg class="pi"><use href="#r7"/></svg><svg class="pi"><use href="#r8"/></svg><svg class="pi"><use href="#r9"/></svg>
        <span class="pcombo"><i class="arr dark"></i></span>
        <span class="pbtn active">所有项目</span><span class="pbtn cur">当前项目</span>
      </div>
      <div class="pmid">
        <div class="pmain">
          <div class="ptabs">
            <span class="ptab on">待审核</span><span class="ptab t2">已提交</span><span class="ptab t3x">已完成</span><i class="arr black"></i>
          </div>
          <div class="thead">
            <span>文件名</span><span>提交人</span><span>日期</span><span>校对</span><span>审核</span><span>审定</span><span>项目</span>
          </div>
          <div class="tree">
            <i class="dot d1"></i><i class="dot d2"></i><i class="dot d3"></i><i class="dot d4"></i>
            <div class="tr"><span class="nm p0"><i class="bx plus"></i><span>签字流程测试</span></span></div>
            <div class="tr"><span class="nm p0"><i class="bx"></i><span>深圳市中设广场项目</span></span></div>
            <div class="tr"><span class="nm p1"><i class="bx"></i><span>施工图</span></span></div>
            <div class="tr"><span class="nm p2"><i class="bx"></i><svg class="ti14"><use href="#dwgfile"/></svg><i class="m10">SY-PLAN-L2.dwg</i></span><span class="c">张路</span><span class="c"><i class="m10">2020-10-15</i></span><span class="c">进行中</span><span></span><span></span><span class="c">深圳市中设</span></div>
            <div class="tr"><span class="nm p3"><i class="bx plus"></i><svg class="ti12"><use href="#r7"/></svg><span>批注</span></span></div>
            <div class="tr"><span class="nm p3"><i class="bx"></i><svg class="ti12"><use href="#r7"/></svg><span>校对批注</span></span></div>
            <div class="tr"><span class="nm p4"><svg class="ti15"><use href="#warn"/></svg><span>刘大钧<i class="cl">:</i>商业墙身应完善室外空调机位设计&#xFF0C;避免结构梁、广告位、装修吊顶及及室内水电管线影响</span></span></div>
            <div class="tr"><span class="nm p4"><svg class="ti15"><use href="#cmt"/></svg><span>刘大钧<i class="cl">:</i>人防门不应影响停车位使用&#xFF0C;消火栓布置及设备用房开门</span></span></div>
            <div class="tr"><span class="nm p4"><svg class="ti15"><use href="#ring"/></svg><span>刘大钧<i class="cl">:</i>汽车库、修车库的疏散楼梯的宽度不应小于<i class="m10">1.1m</i></span></span></div>
            <div class="tr"><span class="nm p4"><svg class="ti15"><use href="#ring"/></svg><span>刘大钧<i class="cl">:</i>节能模型房间功能设计与建筑设计不一致&#xFF08;能耗房间漏设/设置有误&#xFF09;</span></span></div>
            <div class="tr"><span class="nm p4"><svg class="ti15"><use href="#cmt"/></svg><span>刘大钧<i class="cl">:</i>在穿过建筑物或进入建筑物内院的消防车道两侧&#xFF0C;不应设置影响消防车通行或人员安全疏散</span></span></div>
            <div class="tr"><span class="nm p4"><svg class="ti15"><use href="#ok"/></svg><span>刘大钧<i class="cl">:</i>九层<i class="m10">(</i>高度不大于<i class="m10">27m)</i>及以下住宅供暖空调房间门窗应按要求设置新风口或机械通风<i class="m10">: 6F</i>及</span></span></div>
            <div class="tr"><span class="nm p4"><svg class="ti15"><use href="#ok"/></svg><span>刘大钧<i class="cl">:</i>托儿所、幼儿园室外活动场地应有<i class="m10">1</i>&#xFF0F;<i class="m10">2</i>以上的面积在标准建筑日照阴影线之外&#xFF08;补充日照计</span></span></div>
            <div class="tr"><span class="nm p3"><i class="bx plus"></i><span class="hl"><svg class="ti12"><use href="#r7"/></svg><span>审核批注</span></span></span></div>
            <div class="tr"><span class="nm p2"><i class="bx plus"></i><svg class="ti14"><use href="#dwgfile"/></svg><i class="m10">SY-PLAN-SL.dwg</i></span><span class="c">张路</span><span class="c"><i class="m10">2020-10-14</i></span><span class="c">进行中</span><span></span><span></span><span class="c">深圳市中设</span></div>
            <div class="tr"><span class="nm p0"><i class="bx plus"></i><span>深圳市观澜河干流污染治理工程</span></span></div>
          </div>
          <div class="hscroll"><i class="ta left"></i><span class="hthumb"><i class="hgrip"></i></span><i class="ta right"></i></div>
        </div>
        <aside class="pside">
          <div class="sidetab"><span>校</span><span>审</span><span class="red">3</span></div>
          <div class="sidetxt s1">提<br>资</div>
          <div class="sidetxt s2">会<br>签</div>
          <i class="arr black sdown"></i>
        </aside>
      </div>
      <div class="pbottom">
        <span>设计区</span><span>提资区</span><span>公共区</span><span>打印区</span><span class="on">审核区</span><span>消息</span><span>回收站</span>
      </div>
    </section>
  </main>

  <footer class="status">
    <span class="scale">1 : 100<i class="arr white"></i></span>
    <span class="coords">272676.267, 133142.070, 0.000</span>
    <span class="sti first"><svg class="sic"><use href="#s1"/></svg></span><span class="sti"><svg class="sic"><use href="#s2"/></svg></span><span class="sti"><svg class="sic"><use href="#s3"/></svg></span>
    <span class="sti box"><svg class="sic"><use href="#s4"/></svg></span><span class="sti box"><svg class="sic"><use href="#s5"/></svg></span><span class="sti box"><svg class="sic"><use href="#s6"/></svg></span><span class="sti box"><svg class="sic"><use href="#s7"/></svg></span><span class="sti box"><svg class="sic"><use href="#s8"/></svg></span>
    <span class="sti"><svg class="sic"><use href="#s9"/></svg></span><span class="sti"><svg class="sic s13"><use href="#s10"/></svg></span><span class="sti box"><svg class="sic"><use href="#s11"/></svg></span>
    <span class="sright">
      <svg class="sic"><use href="#ann"/></svg><span class="ratio">1:1</span><i class="arr white"></i>
      <svg class="sic gap1"><use href="#annb"/></svg><svg class="sic gap2"><use href="#annc"/></svg><svg class="sic gap2"><use href="#wksp"/></svg><svg class="sic gap2"><use href="#gear"/></svg><svg class="sic gap2"><use href="#full"/></svg>
    </span>
  </footer>

  <div class="dialog">
    <div class="dtitle"><svg class="dcloud"><use href="#cloud"/></svg><span>批注文字</span><svg class="dclose" viewBox="0 0 12 12"><path d="M1 1l10 10M11 1L1 11" stroke="#222"/></svg></div>
    <div class="dbody">
      <div class="row r1">
        <label>批注类型</label>
        <div class="listbox">
          <div class="chk"><i></i>一般技术错误</div>
          <div class="chk"><i></i>设计深度不足</div>
          <div class="chk"><i></i>违反政府有关规定</div>
          <div class="chk"><i></i>违反专业技术规范</div>
          <div class="chk"><i></i>违反强条</div>
          <div class="vscroll vs1"><i class="chev up"></i><i class="vthumb t1"></i><i class="chev dn"></i></div>
        </div>
      </div>
      <div class="row r2">
        <label>词条分类</label>
        <div class="sel s340">住宅平面<i class="chev dn"></i></div>
        <label class="lab2">标签</label>
        <div class="sel s174">出图校审<i class="chev dn"></i></div>
      </div>
      <div class="row r3">
        <label>批注词条</label>
        <div class="search">输入文字进行搜索</div>
      </div>
      <div class="wordlist">
        <div class="lh"><span>序号</span><span>标题</span><span>内容</span><span></span></div>
        <div class="lr"><span>1</span><span></span><span>每套住宅的自然通风开口面积不应小于地面面积的<i class="h">5%</i></span></div>
        <div class="lr"><span>2</span><span></span><span>起居室&#xFF08;厅&#xFF09;内布置家具的墙面直线长度宜大于<i class="h">3m</i></span></div>
        <div class="lr"><span>3</span><span></span><span>无障碍门槛高度及门内外地面高差不应大于<i class="h">15mm</i>&#xFF0C;并应以斜坡过渡</span></div>
        <div class="lr"><span>4</span><span></span><span>外廊、内天井及上人屋面等临空处栏杆净高&#xFF0C;六层及六层以下不应低<i class="h">...</i></span></div>
        <div class="lr"><span>5</span><span></span><span>消防电梯前室或合用前室的门应采用乙级防火门&#xFF0C;不应设置卷帘</span></div>
        <div class="lr"><span>6</span><span></span><span>供轮椅通行的走道和通道净宽不应小于<i class="h">1.20m</i></span></div>
        <div class="lr"><span>7</span><span></span><span>当烟道或排风道中心线距屋脊的水平面投影距离小于<i class="h">1.5m</i>时&#xFF0C;应高出<i class="h">...</i></span></div>
        <div class="lr"><span>8</span><span></span><span>当凸窗窗台高度低于或等于<i class="h">0.45m</i>时&#xFF0C;其防护高度从窗台面起算不应低<i class="h">...</i></span></div>
        <div class="lr"><span>9</span><span></span><span class="ind">居住区内的居委会、卫生站、健身房、物业管理、会所、社区中心、<i class="h">...</i></span></div>
        <div class="lr"><span>10</span><span></span><span>窗外没有阳台或平台的外窗&#xFF0C;窗台距楼面、地面的净高低于<i class="h">0.90m</i>时&#xFF0C;<i class="h">...</i></span></div>
        <div class="lr"><span>11</span><span></span><span>开向疏散楼梯或疏散楼梯间的门&#xFF0C;当其完全开启时&#xFF0C;不应减少楼梯平<i class="h">...</i></span></div>
        <div class="vscroll vs2"><i class="chev up"></i><i class="vthumb t2"></i><i class="chev dn"></i></div>
      </div>
      <label class="lab3">批注意见</label>
      <div class="opinion">当凸窗窗台高度低于或等于<i class="h">0.45m</i>时&#xFF0C;其防护高度从窗台面起算不应低于<i class="h">0.9m</i>&#xFF1B;当凸窗窗台高度高于<i class="h">0.45m</i>时&#xFF0C;其防护高度从窗台面起算不应低于<i class="h">0.6m</i></div>
      <div class="dbtns">
        <span class="btn off">加入个人词</span><span class="btn off o2">申请正式词</span>
        <span class="btn ok">确定<i class="h">(A)</i></span><span class="btn cancel">取消<i class="h">(C)</i></span>
      </div>
    </div>
    <i class="grab"></i>
  </div>
</div>
</body>
</html>
```

FILE: styles.css
```css
* { box-sizing: border-box; }
html, body { margin: 0; padding: 0; width: 1920px; height: 1042px; overflow: hidden; }
body { font-family: "Noto Sans CJK SC", "Liberation Sans", sans-serif; font-size: 12px; color: #222; background: #2f3640; }
i { font-style: normal; display: block; }
.defs { position: absolute; width: 0; height: 0; }
.app { position: relative; display: flex; flex-direction: column; width: 1920px; height: 1042px; }

/* shared triangle */
.arr { width: 0; height: 0; flex: none; border-left: 4px solid transparent; border-right: 4px solid transparent; border-top: 5px solid #b3bac2; }
.arr.white { border-top-color: #fff; }
.arr.dark { border-left-width: 2px; border-right-width: 2px; border-top: 3px solid #444; }
.arr.black { border-left-width: 5px; border-right-width: 5px; border-top: 6px solid #111; }

/* half-width runs: 12px tall glyphs on a 6px advance */
.lat, .tab, .h, .m10, .lr span:first-child { font-family: "Liberation Mono", monospace; font-size: 12px; letter-spacing: -1.2px; }

/* title */
.titlebar { height: 23px; flex: none; background: #fff; display: flex; align-items: center; padding-left: 2px; }
.logo { width: 14px; height: 14px; margin-right: 7px; flex: none; }
.ttl { color: #8c8c8c; font-size: 12.4px; white-space: nowrap; }
.winbtns { margin-left: auto; display: flex; align-items: center; gap: 33px; padding-right: 15px; }
.wb { width: 10px; height: 10px; }

/* menu */
.menubar { height: 20px; flex: none; background: #2f3640; border-bottom: 1px solid #e8e8e8; color: #f2f2f2; display: flex; align-items: center; padding-left: 11px; font-size: 12px; white-space: nowrap; }
.menubar span { width: 60px; flex: none; }
.menubar span:nth-child(4) { width: 56px; }
.menubar span:nth-child(5) { width: 62px; }
.menubar span:nth-child(7) { width: 62px; }
.menubar span:nth-child(8) { width: 62px; }
.menubar span:nth-child(9) { width: 67px; }
.menubar span:nth-child(10) { width: 89px; }
.menubar span:nth-child(11) { width: 65px; }
.menubar span:nth-child(12) { width: 65px; }
.menubar span:nth-child(13) { width: 69px; }

/* toolbars */
.tb { flex: none; background: #434a55; display: flex; align-items: center; }
.tb1 { width: 1092px; height: 27px; }
.tb2 { width: 1012px; height: 26px; margin-top: 1px; }
.grip { width: 4px; height: 22px; flex: none; border-left: 1px solid #9aa2ac; border-right: 1px solid #9aa2ac; }
.g2 { margin-left: 2px; margin-right: 1px; }
.g4 { margin-left: 4px; margin-right: 0; }
.g5 { margin: 0 1px 0 5px; }
.g41 { margin: 0 1px 0 4px; }
.g50 { margin: 0 0 0 5px; }
.g8 { margin: 0 0 0 8px; }
.ti { width: 24px; height: 24px; flex: none; display: flex; align-items: center; justify-content: center; }
.ti.t3 { margin-left: 2px; }
.ic { width: 16px; height: 16px; flex: none; }
.ic14 { width: 14px; height: 14px; margin-right: 3px; flex: none; }
.udgroup { width: 60px; height: 23px; background: #22262e; display: flex; align-items: center; justify-content: space-between; padding: 0 2px 0 3px; flex: none; }
.combo { height: 23px; flex: none; background: #1f232c; border-bottom: 2px solid #6a727e; color: #9aa1a9; display: flex; align-items: center; padding: 0 5px 0 3px; white-space: nowrap; margin-left: 1px; }
.combo .arr { margin-left: auto; }
.tb1 .c2 { margin-left: 2px; }
.tb1 .c1 { margin-left: 3px; }
.w99 { width: 99px; }
.w100 { width: 100px; }
.w300 { width: 300px; padding-left: 6px; margin-left: 2px; }
.w154 { width: 154px; margin-left: 12px; padding-left: 7px; }
.w169 { width: 169px; margin-left: 3px; padding-left: 6px; }
.w122 { width: 122px; margin-left: 1px; padding-left: 7px; }
.w116 { width: 116px; margin-left: 3px; padding-left: 5px; }
.sw { width: 12px; height: 13px; background: #fff; flex: none; margin-right: 4px; }
.ln { height: 1px; background: #eee; margin-right: 4px; flex: none; }
.l62 { width: 62px; }
.l37 { width: 37px; }

/* main zone */
.body { flex: 1; min-height: 0; display: flex; }
.workspace { width: 1260px; flex: none; display: flex; flex-direction: column; }
.workarea { height: 818px; flex: none; display: flex; padding-top: 3px; }
.leftbar { width: 30px; flex: none; background: #363d48; }
.leftstrip { width: 28px; height: 425px; background: #454c58; display: flex; flex-direction: column; align-items: center; }
.bars { height: 6px; border-top: 2px solid #8d949e; border-bottom: 2px solid #8d949e; width: 100%; flex: none; }
.leftstrip .bars { margin-bottom: 4px; }
.lic { width: 16px; height: 16px; flex: none; margin: 0 2px 7px 0; }
.center { flex: 1; min-width: 0; display: flex; flex-direction: column; background: #2b2f37; }
.tabs { height: 26px; flex: none; display: flex; background: #2b2f37; }
.tabarrow { width: 10px; margin: 0 2px 0 1px; background: #4b535e; display: flex; align-items: center; justify-content: center; }
.tab { width: 172px; margin-right: 1px; background: #434a55; color: #8d949c; display: flex; align-items: center; padding-left: 3px; white-space: nowrap; }
.tab.on { background: #4f6075; color: #fff; font-weight: 700; }
.dw { width: 15px; height: 16px; margin-right: 1px; flex: none; }
.tabx { width: 10px; height: 10px; margin-left: auto; margin-right: 10px; }
.tabadd { width: 29px; background: #434a55; display: flex; align-items: center; justify-content: center; }
.drawing { height: 770px; flex: none; background: #1a1d23; }
.cad { display: block; width: 1165px; height: 770px; }
.cad * { vector-effect: non-scaling-stroke; }
.crisp { shape-rendering: crispEdges; }
.redtxt text { fill: #f00; font-family: "Noto Sans CJK SC", sans-serif; font-weight: 300; }
.redtxt text.thin { font-family: Roboto, "Liberation Sans", sans-serif; font-weight: 100; }
.layouttabs { height: 14px; flex: none; display: flex; align-items: stretch; gap: 2px; padding-left: 1px; color: #fff; }
.lb { width: 14px; background: #434a55; display: flex; align-items: center; justify-content: center; }
.lb.dim i { opacity: .55; }
.lb i { width: 0; height: 0; border: 4px solid transparent; }
.lb .up { border-top: 0; border-bottom: 5px solid #fff; }
.lb .first, .lb .prev { border-left: 0; border-right: 6px solid #c8cdd3; }
.lb .next, .lb .last { border-right: 0; border-left: 6px solid #c8cdd3; }
.ltab { display: flex; align-items: center; justify-content: center; background: #434a55; font-size: 12px; line-height: 1; }
.ltab.on { width: 48px; background: #4f6075; font-weight: 700; margin-left: 1px; }
.ltab.lay { width: 53px; margin-left: 1px; }
.ltab.plus { width: 30px; font-family: "Liberation Sans", sans-serif; font-weight: 700; }
.under { flex: 1; background: #353c47; }
.tools-right { width: 65px; flex: none; display: flex; margin-top: -3px; background: #2b2f37; gap: 3px; }
.col { width: 27px; flex: none; background: #454c58; display: flex; flex-direction: column; align-items: center; overflow: hidden; }
.cola { margin-top: 30px; margin-left: 1px; }
.colb { width: 28px; }
.col .bars { margin-bottom: 5px; }
.colb .bars { margin-bottom: 7px; }
.cic { width: 16px; height: 16px; flex: none; margin-bottom: 7px; }

/* command */
.command { flex: 1; min-height: 0; display: flex; background: #2b2f37; color: #b5b9be; font-size: 16px; line-height: 18px; }
.cmdside { width: 25px; flex: none; background: #3f4652; padding: 6px 0 0 8px; }
.cmdx { width: 10px; height: 10px; display: block; }
.cmdmain { flex: 1; min-width: 0; display: flex; flex-direction: column; }
.cmdlog { height: 76px; border-bottom: 1px solid #6a707a; white-space: nowrap; }
.cmdlog div { height: 18px; line-height: 15px; }
.cmdinput { height: 23px; padding-top: 1px; white-space: nowrap; }
.m { display: inline; font-family: "Liberation Mono", monospace; font-size: 16px; letter-spacing: -1.6px; }
.cmdscroll { width: 13px; flex: none; margin-right: 7px; background: #2f343d; padding-top: 7px; display: flex; flex-direction: column; align-items: center; }
.cmdscroll .chev { border-color: #7d8690; }
.sthumb { width: 100%; height: 42px; background: #454c58; margin-top: 3px; flex: none; }
.cmdscroll .chev.dn { margin-top: 3px; }

/* right panel */
.panel { width: 658px; flex: none; display: flex; flex-direction: column; margin-top: 4px; background: #4f5c6a; padding: 0 7px 0 5px; }
.ptitle { height: 24px; flex: none; display: flex; align-items: center; color: #fff; font-weight: 700; font-size: 14px; letter-spacing: .4px; padding-left: 15px; margin-bottom: 5px; }
.pclose { width: 10px; height: 10px; margin-left: auto; margin-right: 4px; }
.ptool { height: 28px; flex: none; background: #fff; display: flex; align-items: center; padding-left: 5px; margin-bottom: 2px; border-bottom: 1px solid #c9ced4; }
.pi { width: 15px; height: 15px; flex: none; margin-right: 9px; }
.psep { width: 1px; height: 24px; background: #b6bbc1; margin: 0 3px 0 -1px; flex: none; }
.pcombo { width: 79px; height: 24px; margin-left: 1px; border: 1px solid #d3d6d9; display: flex; align-items: center; justify-content: flex-end; padding-right: 6px; flex: none; }
.pbtn { width: 60px; height: 27px; display: flex; align-items: center; justify-content: center; flex: none; }
.pbtn.active { margin-left: auto; background: linear-gradient(#ffe48c, #f7c95a); border: 1px solid #d9a93a; border-radius: 2px; }
.pbtn.cur { width: 50px; margin: 0 5px 0 6px; white-space: nowrap; }
.pmid { flex: 1; min-height: 0; display: flex; }
.pmain { width: 625px; flex: none; display: flex; flex-direction: column; background: #fff; }
.ptabs { height: 26px; flex: none; display: flex; align-items: center; background: linear-gradient(#eef0f2, #dfe2e5); border-bottom: 1px solid #c6cbd1; position: relative; }
.ptab { height: 100%; display: flex; align-items: center; justify-content: center; font-size: 12px; }
.ptab.on { width: 200px; position: relative; background: linear-gradient(#2c7fdc, #1f62b8); color: #fff; font-weight: 700; font-size: 13px; }
.ptab.on::after { content: ""; position: absolute; bottom: 0; left: 95px; border: 5px solid transparent; border-top: 0; border-bottom: 5px solid #fff; }
.ptab.t2, .ptab.t3x { width: 203px; }
.ptabs .arr.black { margin-left: auto; margin-right: 4px; }
.thead { height: 18px; flex: none; display: grid; grid-template-columns: 181px 85px 100px 65px 65px 65px 1fr; background: #e9edf1; border-bottom: 1px solid #b9cbe0; }
.thead span { border-right: 1px solid #c3cfdc; padding-left: 6px; line-height: 17px; }
.thead span:nth-child(n+2) { padding-left: 8px; }
.tree { flex: 1; min-height: 0; position: relative; overflow: hidden; padding-top: 3px;
  background-image: linear-gradient(#e4e4e4, #e4e4e4), linear-gradient(#e4e4e4, #e4e4e4), linear-gradient(#e4e4e4, #e4e4e4), linear-gradient(#e4e4e4, #e4e4e4), linear-gradient(#e4e4e4, #e4e4e4), linear-gradient(#e4e4e4, #e4e4e4);
  background-size: 1px 100%; background-repeat: no-repeat;
  background-position: 180px 0, 265px 0, 365px 0, 430px 0, 495px 0, 560px 0; }
.tr { height: 19px; display: grid; grid-template-columns: 181px 85px 100px 65px 65px 65px 1fr; align-items: center; white-space: nowrap; position: relative; }
.nm { display: flex; align-items: center; width: 181px; overflow: visible; }
.c { padding-left: 6px; overflow: hidden; }
.p0 { padding-left: 5px; }
.p1 { padding-left: 20px; }
.p2 { padding-left: 37px; }
.p3 { padding-left: 52px; }
.p4 { padding-left: 78px; }
.bx { width: 9px; height: 9px; border: 1px solid #888; background: #fff; flex: none; margin-right: 2px; position: relative; }
.bx::before { content: ""; position: absolute; left: 1px; top: 3px; width: 5px; height: 1px; background: #333; }
.bx.plus::after { content: ""; position: absolute; left: 3px; top: 1px; width: 1px; height: 5px; background: #333; }
.ti14 { width: 15px; height: 15px; flex: none; margin: 0 6px 0 0; }
.ti12 { width: 12px; height: 12px; flex: none; margin: 0 7px 0 2px; }
.ti15 { width: 15px; height: 15px; flex: none; margin-right: 7px; }
.m10, .h { display: inline; }
.cl { display: inline-block; width: 10px; text-align: center; }
.hl { display: flex; align-items: center; height: 20px; width: 78px; margin-left: -1px; background: linear-gradient(#fff0b0, #f9cf5f); border: 1px solid #dcae43; border-radius: 2px; padding-left: 1px; }
.dot { position: absolute; width: 0; border-left: 1px dotted #555; }
.dot.d1 { left: 24px; top: 42px; height: 18px; }
.dot.d2 { left: 41px; top: 80px; height: 200px; }
.dot.d3 { left: 56px; top: 98px; height: 165px; }
.dot.d4 { left: 72px; top: 118px; height: 125px; }
.hscroll { height: 17px; flex: none; background: #f0f1f3; display: flex; align-items: center; padding: 0 8px; border-bottom: 1px solid #b6bbc1; }
.ta { width: 0; height: 0; border-top: 6px solid transparent; border-bottom: 6px solid transparent; }
.ta.left { border-right: 5px solid #5c7390; }
.ta.right { border-left: 5px solid #5c7390; margin-left: auto; }
.hthumb { width: 295px; height: 15px; margin-left: 4px; background: linear-gradient(#f2f3f4, #dcdee1); border: 1px solid #b6bbc1; border-radius: 2px; display: flex; align-items: center; justify-content: center; }
.hgrip { width: 6px; height: 9px; border-left: 1px solid #999; border-right: 1px solid #999; }
.pside { flex: 1; min-width: 0; background: #e2e5e8; position: relative; padding-left: 2px; display: flex; flex-direction: column; }
.sidetab { height: 100px; flex: none; background: linear-gradient(#2c7fdc, #1f62b8); color: #fff; font-weight: 700; font-size: 13px; line-height: 14px; display: flex; flex-direction: column; align-items: center; padding-top: 30px; position: relative; }
.sidetab .red { color: #f00; font-family: "Liberation Sans", sans-serif; font-size: 12px; }
.sidetab::before { content: ""; position: absolute; left: 0; top: 45px; border: 5px solid transparent; border-left: 5px solid #fff; border-right: 0; }
.sidetxt { text-align: center; line-height: 14px; font-size: 13px; color: #222; }
.sidetxt.s1 { margin-top: 36px; }
.sidetxt.s2 { margin-top: 41px; }
.sdown { position: absolute; right: 5px; bottom: 7px; }
.pbottom { height: 27px; flex: none; background: linear-gradient(#eef0f2, #dfe2e5); display: flex; align-items: center; padding-left: 3px; white-space: nowrap; }
.pbottom span { margin-right: 10px; line-height: 25px; height: 25px; }
.pbottom span.on { background: linear-gradient(#2c7fdc, #1f62b8); color: #fff; font-weight: 700; width: 45px; margin: 0 4px 0 -3px; padding-left: 3px; }

/* status bar */
.status { height: 27px; flex: none; background: #2f3640; color: #dfe3e6; display: flex; align-items: center; font-family: "Liberation Sans", sans-serif; font-size: 12.500px; white-space: nowrap; }
.scale { display: flex; align-items: center; gap: 2px; margin-left: 4px; width: 58px; }
.coords { width: 276px; border-bottom: 1px solid #5a626d; line-height: 18px; padding-left: 1px; margin-top: 3px; flex: none; }
.sti { width: 24px; height: 20px; display: flex; align-items: center; justify-content: center; flex: none; }
.sti.first { margin-left: 2px; }
.sti.box { width: 20px; border: 1px solid #5aaef0; margin: 0 2px; }
.sic { width: 15px; height: 15px; flex: none; }
.s13 { width: 13px; height: 13px; }
.sright { margin-left: auto; display: flex; align-items: center; padding-right: 6px; }
.ratio { color: #7d8690; margin: 0 3px; }
.gap1 { margin-left: 14px; }
.gap2 { margin-left: 7px; }

/* dialog */
.dialog { position: absolute; left: 633px; top: 351px; width: 659px; height: 572px; background: #f0f0f0; box-shadow: 0 0 8px rgba(0, 0, 0, .55); z-index: 5; }
.dtitle { height: 30px; background: #fff; display: flex; align-items: center; padding: 0 0 3px 8px; }
.dcloud { width: 15px; height: 11px; margin-right: 6px; }
.dclose { width: 12px; height: 12px; margin-left: auto; margin-right: 9px; }
.dbody { padding: 10px 0 0 12px; }
.row { display: flex; }
.row label, .lab3 { width: 58px; flex: none; display: block; line-height: 20px; white-space: nowrap; }
.listbox { width: 569px; height: 83px; background: #fff; border: 1px solid #8e8e8e; padding: 0 0 0 2px; position: relative; }
.chk { height: 16px; display: flex; align-items: center; line-height: 14px; }
.chk i { width: 13px; height: 13px; border: 1px solid #555; background: #fff; margin-right: 3px; flex: none; }
.vscroll { position: absolute; right: 1px; top: 1px; bottom: 1px; width: 16px; background: #f3f3f3; display: flex; flex-direction: column; align-items: center; }
.chev { width: 7px; height: 7px; border-right: 1px solid #333; border-bottom: 1px solid #333; flex: none; }
.chev.dn { transform: rotate(45deg); }
.chev.up { transform: rotate(225deg); }
.vscroll .chev.up { margin-top: 8px; }
.vscroll .chev.dn { margin-top: auto; margin-bottom: 8px; }
.vthumb { width: 100%; background: #cdcdcd; flex: none; }
.vthumb.t1 { height: 33px; margin-top: 3px; }
.vthumb.t2 { height: 17px; margin-top: 2px; }
.r2 { margin-top: 15px; height: 19px; }
.sel { height: 20px; background: #e3e3e3; border: 1px solid #9c9c9c; display: flex; align-items: center; padding: 0 6px 0 3px; }
.sel .chev { margin: -3px 0 0 auto; }
.s340 { width: 340px; }
.s174 { width: 174px; }
.row .lab2 { width: 35px; margin-left: 19px; }
.r3 { margin-top: 16px; }
.search { width: 567px; height: 21px; background: #fff; border: 1px solid #9c9c9c; color: #8a8a8a; line-height: 18px; padding-left: 4px; }
.wordlist { width: 625px; height: 202px; margin-top: 11px; background: #fff; border: 1px solid #8e8e8e; position: relative; overflow: hidden; }
.lh { height: 26px; display: grid; grid-template-columns: 60px 121px 399px 1fr; }
.lh span { border-right: 1px solid #e4e4e4; padding: 3px 0 0 7px; height: 24px; line-height: 20px; }
.lh span:nth-child(n+2) { padding-left: 6px; }
.lr { height: 16px; line-height: 16px; display: grid; grid-template-columns: 60px 121px 1fr; white-space: nowrap; }
.lr span:first-child { padding-left: 7px; }
.lr span:last-child { padding-left: 6px; }
.lr .ind { padding-left: 12px !important; }
.lab3 { margin-top: 14px; line-height: 14px; }
.opinion { width: 627px; height: 70px; margin-top: 11px; background: #fff; border: 1px solid #0078d7; padding: 3px 2px; line-height: 13px; color: #111; word-break: break-all; }
.dbtns { display: flex; margin-top: 21px; width: 625px; }
.btn { height: 20px; display: flex; align-items: center; justify-content: center; border: 1px solid #adadad; background: #e8e8e8; flex: none; white-space: nowrap; }
.btn.off { width: 84px; background: #c6c6c6; color: #ececec; border-color: #bdbdbd; margin-left: 1px; }
.btn.o2 { margin-left: 16px; }
.btn.ok { width: 54px; margin-left: auto; }
.btn.cancel { width: 53px; margin-left: 9px; }
.grab { position: absolute; right: 2px; bottom: 2px; width: 9px; height: 9px; background-image: radial-gradient(#aaa 1px, transparent 1.2px); background-size: 3px 3px; }
```
